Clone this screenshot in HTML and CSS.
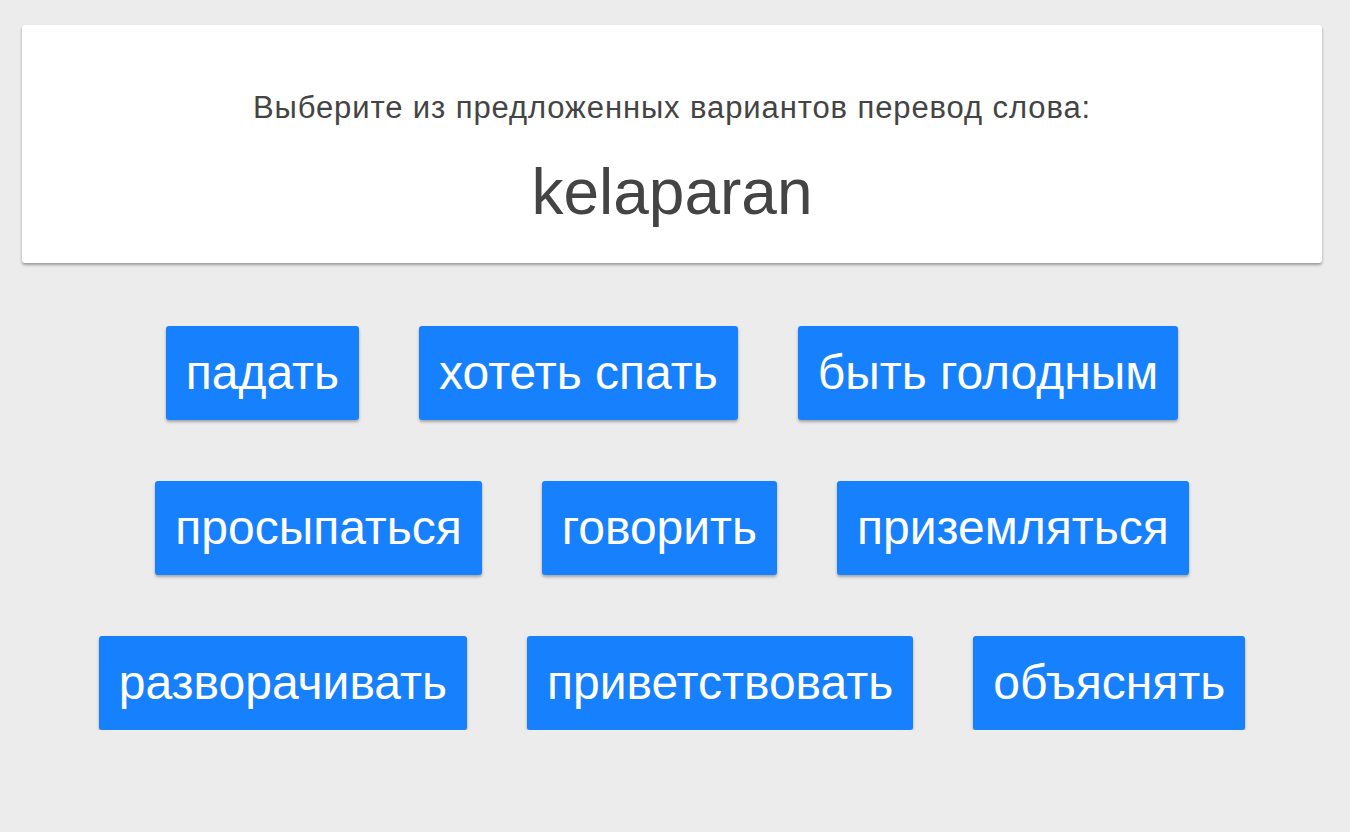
FILE: index.html
```html
<!DOCTYPE html>
<html lang="ru">
<head>
<meta charset="utf-8">
<title>Перевод слова</title>
<link rel="stylesheet" href="styles.css">
</head>
<body>
<div class="page">
  <div class="card">
    <div class="prompt">Выберите из предложенных вариантов перевод слова:</div>
    <div class="word">kelaparan</div>
  </div>
  <div class="options">
    <div class="row">
      <button class="opt">падать</button>
      <button class="opt">хотеть спать</button>
      <button class="opt">быть голодным</button>
    </div>
    <div class="row">
      <button class="opt">просыпаться</button>
      <button class="opt">говорить</button>
      <button class="opt">приземляться</button>
    </div>
    <div class="row">
      <button class="opt">разворачивать</button>
      <button class="opt">приветствовать</button>
      <button class="opt">объяснять</button>
    </div>
  </div>
</div>
</body>
</html>
```
FILE: styles.css
```css
html, body {
  margin: 0;
  padding: 0;
  background: #ececec;
  font-family: "Liberation Sans", Arial, sans-serif;
}
.page {
  padding: 25px 28px 0 22px;
}
.card {
  background: #fff;
  border-radius: 3px;
  box-shadow: 0 2px 3px rgba(0, 0, 0, 0.35);
  height: 238px;
  box-sizing: border-box;
  padding-top: 66px;
  text-align: center;
  color: #444;
}
.prompt {
  font-size: 31px;
  line-height: 34px;
  letter-spacing: 0.9px;
}
.word {
  font-size: 64px;
  line-height: 72px;
  margin-top: 31px;
}
.options {
  padding-top: 63px;
  display: flex;
  flex-direction: column;
  gap: 61px;
}
.row {
  display: flex;
  justify-content: center;
  gap: 60px;
}
.opt {
  font-family: inherit;
  font-size: 48px;
  line-height: 54px;
  padding: 20px 20px;
  border: none;
  border-radius: 3px;
  background: #1780fc;
  color: #fff;
  box-shadow: 0 2px 3px rgba(0, 0, 0, 0.3);
  cursor: pointer;
}
```
